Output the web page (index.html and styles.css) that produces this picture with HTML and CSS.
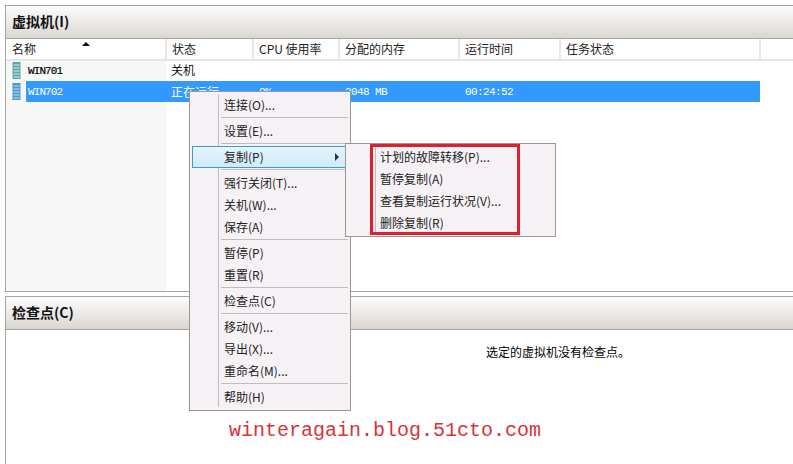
FILE: index.html
```html
<!DOCTYPE html>
<html lang="zh-CN">
<head>
  <meta charset="UTF-8" />
  <title>Hyper-V 管理器</title>
  <link rel="stylesheet" href="styles.css">
</head>
<body>
  <div class="panel panel-vms">
    <h2 class="panel-title">虚拟机(I)</h2>
    <div class="col-header">
      <div class="col col-name">名称<span class="sort-arrow"></span></div>
      <div class="col col-state">状态</div>
      <div class="col col-cpu">CPU 使用率</div>
      <div class="col col-mem">分配的内存</div>
      <div class="col col-time">运行时间</div>
      <div class="col col-task">任务状态</div>
    </div>
    <div class="vm-list">
      <div class="vm-row">
        <svg class="vm-icon" width="20" height="20" viewBox="0 0 20 20">
          <rect x="6.5" y="1" width="8" height="17" fill="#5aa9a8"/>
          <path d="M7.5 4h6M7.5 7h6M7.5 10h6M7.5 13h6M7.5 16h6" stroke="#d8eeee" stroke-width="1"/>
        </svg>
        <div class="vm-cells">
          <div class="cell cell-name">WIN701</div>
          <div class="cell cell-state">关机</div>
        </div>
      </div>
      <div class="vm-row selected">
        <svg class="vm-icon" width="20" height="20" viewBox="0 0 20 20">
          <rect x="6.5" y="1" width="8" height="17" fill="#4a9cc8"/>
          <path d="M7.5 4h6M7.5 7h6M7.5 10h6M7.5 13h6M7.5 16h6" stroke="#bfe0f2" stroke-width="1"/>
        </svg>
        <div class="vm-cells">
          <div class="cell cell-name">WIN702</div>
          <div class="cell cell-state">正在运行</div>
          <div class="cell cell-cpu">0%</div>
          <div class="cell cell-mem">2048 MB</div>
          <div class="cell cell-time">00:24:52</div>
        </div>
      </div>
    </div>
  </div>

  <div class="panel panel-checkpoints">
    <h2 class="panel-title">检查点(C)</h2>
    <p class="empty-note">选定的虚拟机没有检查点。</p>
  </div>

  <div class="menu menu-main">
    <div class="menu-item">连接(O)...</div>
    <div class="menu-sep"></div>
    <div class="menu-item">设置(E)...</div>
    <div class="menu-sep"></div>
    <div class="menu-item active">复制(P)<span class="menu-arrow"></span></div>
    <div class="menu-sep"></div>
    <div class="menu-item">强行关闭(T)...</div>
    <div class="menu-item">关机(W)...</div>
    <div class="menu-item">保存(A)</div>
    <div class="menu-sep"></div>
    <div class="menu-item">暂停(P)</div>
    <div class="menu-item">重置(R)</div>
    <div class="menu-sep"></div>
    <div class="menu-item">检查点(C)</div>
    <div class="menu-sep"></div>
    <div class="menu-item">移动(V)...</div>
    <div class="menu-item">导出(X)...</div>
    <div class="menu-item">重命名(M)...</div>
    <div class="menu-sep"></div>
    <div class="menu-item">帮助(H)</div>
  </div>

  <div class="menu menu-sub">
    <div class="menu-item">计划的故障转移(P)...</div>
    <div class="menu-item">暂停复制(A)</div>
    <div class="menu-item">查看复制运行状况(V)...</div>
    <div class="menu-item">删除复制(R)</div>
  </div>
  <div class="red-box"></div>

  <div class="watermark">winteragain.blog.51cto.com</div>
</body>
</html>
```

FILE: styles.css
```css
html, body {
  margin: 0;
  padding: 0;
  height: 464px;
  overflow: hidden;
}
body {
  background: #fff;
  color: #111;
  font-family: "Noto Sans CJK SC", "Liberation Sans", sans-serif;
  font-size: 12px;
  padding: 5px 0 0 5px;
  box-sizing: border-box;
}
.panel {
  border: 1px solid #a5a5a5;
  border-right: none;
  background: #fff;
}
.panel-vms {
  height: 287px;
  box-sizing: border-box;
  display: flex;
  flex-direction: column;
}
.panel-checkpoints {
  margin-top: 4px;
  height: 170px;
  border-bottom: none;
}
.panel-title {
  margin: 0;
  height: 32px;
  line-height: 31px;
  padding-left: 6px;
  font-size: 14px;
  font-weight: 700;
  color: #111;
  background: linear-gradient(#fdfcfc, #f5f3f2 25%, #dad7d2);
  border-bottom: 1px solid #a5a5a5;
}
.col-header {
  display: flex;
  height: 22px;
  box-sizing: border-box;
  border-bottom: 2px solid #e6e6e6;
}
.col {
  position: relative;
  box-sizing: border-box;
  line-height: 19px;
  padding-left: 5px;
  border-right: 2px solid #e6e6e6;
  color: #222;
}
.col-name { width: 161px; padding-left: 6px; }
.col-state { width: 87px; }
.col-cpu { width: 86px; }
.col-mem { width: 120px; }
.col-time { width: 101px; }
.col-task { width: 200px; }
.sort-arrow {
  position: absolute;
  left: 76px;
  top: 3px;
  border: 4px solid transparent;
  border-top: none;
  border-bottom: 4px solid #111;
}
.vm-list {
  flex: 1;
  background: linear-gradient(#f7f7f7, #f7f7f7) no-repeat;
  background-size: 160px 100%;
}
.vm-row {
  display: flex;
  height: 21px;
  align-items: center;
}
.vm-row:first-child {
  height: 20px;
}
.vm-row:first-child .cell-state {
  margin-top: -3px;
}
.vm-icon {
  width: 20px;
  flex-shrink: 0;
}
.vm-cells {
  display: flex;
  width: 734px;
  height: 100%;
  align-items: center;
}
.selected .vm-cells {
  background: #3399ff;
  color: #fff;
}
.cell {
  box-sizing: border-box;
  padding-left: 6px;
  white-space: nowrap;
}
.cell-name {
  width: 140px;
  padding-left: 2px;
  font-family: "Liberation Mono", monospace;
  font-size: 11px;
  letter-spacing: -0.9px;
  color: #000;
  -webkit-text-stroke: 0.2px currentColor;
}
.selected .cell-name {
  color: #fff;
  -webkit-text-stroke: 0;
}
.cell-state { width: 87px; padding-left: 5px; }
.cell-cpu, .cell-mem, .cell-time {
  font-family: "Liberation Mono", monospace;
  font-size: 11px;
  letter-spacing: -0.6px;
}
.cell-cpu { width: 86px; }
.cell-mem { width: 120px; }
.cell-time { width: 101px; }
.empty-note {
  margin: 14px 0 0 480px;
  color: #000;
  line-height: 16px;
}
.menu {
  position: absolute;
  box-sizing: border-box;
  border: 1px solid #979797;
  background-color: #f5f1f5;
  padding: 2px;
  background-image: linear-gradient(#bdbdbd, #bdbdbd);
  background-repeat: no-repeat;
  background-size: 1px calc(100% - 6px);
  background-position-y: 3px;
}
.menu-main {
  left: 189px;
  top: 91px;
  width: 162px;
  height: 320px;
  background-position-x: 28px;
}
.menu-sub {
  left: 345px;
  top: 143px;
  width: 211px;
  height: 94px;
  background-position-x: 29px;
}
.menu-item {
  position: relative;
  box-sizing: border-box;
  height: 22px;
  line-height: 21px;
  padding-left: 32px;
  color: #222;
  white-space: nowrap;
}
.menu-item.active {
  border: 1px solid #3c9dc9;
  line-height: 19px;
  padding-left: 31px;
  margin-right: 2px;
  background: linear-gradient(#e4f4fd, #cfebfb);
}
.menu-arrow {
  position: absolute;
  right: 6px;
  top: 6px;
  border: 4px solid transparent;
  border-right: none;
  border-left: 4px solid #333;
}
.menu-sep {
  height: 4px;
  margin-left: 29px;
  box-sizing: border-box;
  border-top: 1px solid #bdbdbd;
  position: relative;
  top: 1px;
}
.red-box {
  position: absolute;
  left: 370px;
  top: 144px;
  width: 150px;
  height: 91px;
  box-sizing: border-box;
  border: 3px solid #dd2030;
}
.watermark {
  position: absolute;
  left: 229px;
  top: 419px;
  font-family: "Liberation Mono", monospace;
  font-size: 20px;
  line-height: 24px;
  color: #d8333a;
}
```
